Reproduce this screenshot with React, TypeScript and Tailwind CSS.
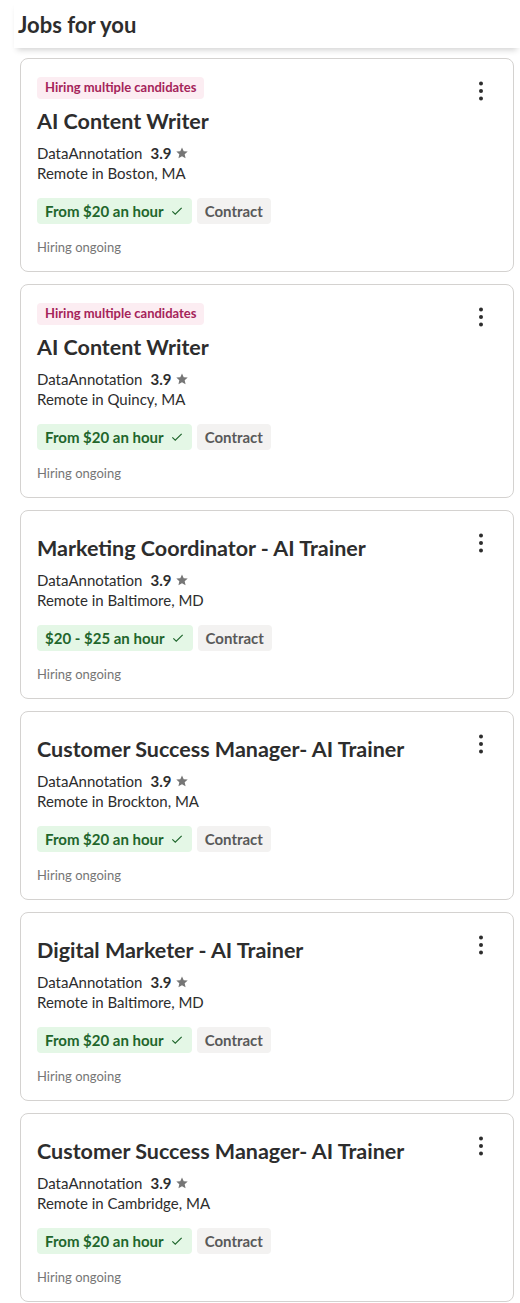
import React from "react";

type Job = {
  title: string;
  location: string;
  salary: string;
  multiple?: boolean;
};

const jobs: Job[] = [
  { title: "AI Content Writer", location: "Remote in Boston, MA", salary: "From $20 an hour", multiple: true },
  { title: "AI Content Writer", location: "Remote in Quincy, MA", salary: "From $20 an hour", multiple: true },
  { title: "Marketing Coordinator - AI Trainer", location: "Remote in Baltimore, MD", salary: "$20 - $25 an hour" },
  { title: "Customer Success Manager- AI Trainer", location: "Remote in Brockton, MA", salary: "From $20 an hour" },
  { title: "Digital Marketer - AI Trainer", location: "Remote in Baltimore, MD", salary: "From $20 an hour" },
  { title: "Customer Success Manager- AI Trainer", location: "Remote in Cambridge, MA", salary: "From $20 an hour" },
];

const Kebab = () => (
  <svg width="24" height="24" viewBox="0 0 24 24" fill="#2d2d2d">
    <circle cx="12" cy="4.5" r="2" />
    <circle cx="12" cy="12" r="2" />
    <circle cx="12" cy="19.5" r="2" />
  </svg>
);

const Star = () => (
  <svg width="14" height="14" viewBox="0 0 24 24" fill="#767676" className="ml-1">
    <path d="M12 2.5l2.9 6.3 6.9.7-5.2 4.6 1.5 6.8L12 17.4l-6.1 3.5 1.5-6.8L2.2 9.5l6.9-.7z" />
  </svg>
);

const Check = () => (
  <svg width="14" height="14" viewBox="0 0 24 24" fill="none" stroke="#1f662c" strokeWidth="2" className="ml-1.5">
    <path d="M4 12.5l5 5L20 6.5" />
  </svg>
);

const JobCard = ({ job }: { job: Job }) => (
  <div
    className={`relative rounded-lg border border-[#d4d2d0] bg-white px-4 pb-[15px] ${
      job.multiple ? "pt-[18px]" : "pt-[23px]"
    }`}
  >
    <button className="absolute right-[20px] top-[20px]">
      <Kebab />
    </button>
    {job.multiple && (
      <div className="mb-2 flex h-[22px] w-fit items-center rounded bg-[#fcedf2] px-2 text-[13px] font-bold text-[#a5245a]">
        Hiring multiple candidates
      </div>
    )}
    <h2 className="text-[21.5px] font-bold leading-[28px] text-[#2d2d2d]">{job.title}</h2>
    <div className="mt-2 flex items-center text-[15px] leading-5 text-[#2d2d2d]">
      <span>DataAnnotation</span>
      <span className="ml-2 font-bold">3.9</span>
      <Star />
    </div>
    <div className="text-[15px] leading-5 text-[#2d2d2d]">{job.location}</div>
    <div className="mt-[15px] flex gap-[5px]">
      <span className="inline-flex h-[26px] items-center rounded bg-[#e4f7e6] px-2 text-[15px] font-bold text-[#1f662c]">
        {job.salary}
        <Check />
      </span>
      <span className="inline-flex h-[26px] items-center rounded bg-[#f3f2f1] px-2 text-[15px] font-bold text-[#595959]">
        Contract
      </span>
    </div>
    <div className="mt-[14px] text-[13px] leading-[18px] text-[#767676]">Hiring ongoing</div>
  </div>
);

export default function App() {
  return (
    <div className="min-h-screen bg-white" style={{ fontFamily: "Lato, 'Noto Sans', sans-serif" }}>
      <div className="ml-[14px] flex h-12 items-center bg-white px-1 shadow-[0_5px_6px_-3px_rgba(0,0,0,0.18)]">
        <h1 className="text-[22px] font-bold text-[#2d2d2d]">Jobs for you</h1>
      </div>
      <div className="flex flex-col gap-[12px] pl-5 pr-[6px] pt-[10px]">
        {jobs.map((job, i) => (
          <JobCard key={i} job={job} />
        ))}
      </div>
    </div>
  );
}
